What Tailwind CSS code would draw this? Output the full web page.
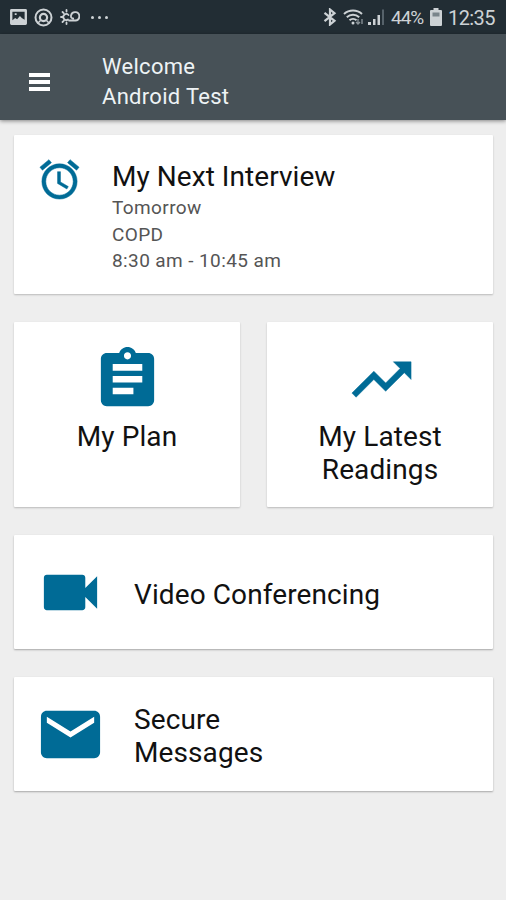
<!DOCTYPE html>
<html lang="en">

<head>
    <meta charset="UTF-8" />
    <meta name="viewport" content="width=device-width, initial-scale=1.0" />
    <title>Welcome</title>
    <script src="https://cdn.jsdelivr.net/npm/@tailwindcss/browser@4"></script>
</head>

<body class="bg-[#eeeeee] font-[Roboto,sans-serif] text-[#111111] h-[900px] overflow-hidden">
    <!-- Status bar -->
    <div class="bg-[#222d34] h-[34px] flex items-center justify-between pl-[10px] pr-[10px] text-[#cdd2d5]">
        <div class="flex items-center gap-[7px]">
            <svg class="w-[17px] h-[16px]" viewBox="0 0 18 17" fill="currentColor">
                <path fill-rule="evenodd" d="M1.500 0h15A1.500 1.500 0 0 1 18 1.500v14a1.500 1.500 0 0 1-1.500 1.500h-15A1.500 1.500 0 0 1 0 15.500v-14A1.500 1.500 0 0 1 1.500 0zM2.500 3v9l3-2.500 2 1.500 3-3.500 2 2 3 2V3zM5 4.500h2v2H5z" />
            </svg>
            <svg class="w-[19px] h-[19px]" viewBox="0 0 19 19" fill="none" stroke="currentColor">
                <circle cx="9.500" cy="9.500" r="8" stroke-width="2" />
                <circle cx="9.500" cy="9.500" r="3.600" stroke-width="2.200" />
                <path d="M3.500 15.500l3-3M12.500 12.500l3 3" stroke-width="1.500" />
            </svg>
            <svg class="w-[20px] h-[18px]" viewBox="0 0 20 18" fill="none" stroke="currentColor" stroke-width="1.800" stroke-linecap="round">
                <path d="M8 11.500a3 3 0 1 1 .5-4.500M1 9h1.500M2.500 4l1.200 1.200M6.500 2v1.500M2.500 14l1.200-1.200M6.500 16v-1.500" />
                <path d="M9 12.500h6.500a4.200 4.200 0 1 0-4.500-5c-.3 2 .8 3 2.200 3" />
            </svg>
            <div class="flex gap-[4px] pl-[4px]">
                <span class="w-[3px] h-[3px] rounded-full bg-[#cdd2d5]"></span>
                <span class="w-[3px] h-[3px] rounded-full bg-[#cdd2d5]"></span>
                <span class="w-[3px] h-[3px] rounded-full bg-[#cdd2d5]"></span>
            </div>
        </div>
        <div class="flex items-center">
            <svg class="w-[14px] h-[18px]" viewBox="0 0 14 18" fill="none" stroke="currentColor" stroke-width="2.200">
                <path d="M1.500 4.800l10 8L7 16.500v-15l4.500 3.700-10 8" />
            </svg>
            <svg class="w-[22px] h-[18px] ml-[6px]" viewBox="0 0 22 18" fill="none" stroke="currentColor" stroke-width="2">
                <path d="M1 6a13.500 13.500 0 0 1 18 0M3.800 9.200a9.300 9.300 0 0 1 12.400 0M6.500 12.300a5.200 5.200 0 0 1 7 0" />
                <circle cx="10" cy="15" r="1.500" fill="currentColor" stroke="none" />
                <path d="M15 11v5M13 14l2 2 2-2M19 16v-5" stroke="#8d969b" stroke-width="1.300" />
            </svg>
            <svg class="w-[17px] h-[18px] ml-[3px]" viewBox="0 0 17 18" fill="currentColor">
                <path d="M0 14h3v3H0zM5 11h2.500v6H5zM9.500 7H12v10H9.500z" />
                <path d="M14 1.500h2V17h-2z" fill="#56626a" />
            </svg>
            <span class="text-[19px] ml-[6px] w-[35px] whitespace-nowrap tracking-[-1px] mt-[2px]">44%</span>
            <svg class="w-[12px] h-[18px] ml-[4px]" viewBox="0 0 12 18" fill="currentColor">
                <path fill-rule="evenodd" d="M3.500 0h5v2H11a1 1 0 0 1 1 1v14a1 1 0 0 1-1 1H1a1 1 0 0 1-1-1V3a1 1 0 0 1 1-1h2.500z" />
                <path d="M2.500 4.500h7v4h-7z" fill="#7a858b" />
            </svg>
            <span class="text-[20px] ml-[6px] w-[48px] whitespace-nowrap tracking-[-0.6px] mt-[2px]">12:35</span>
        </div>
    </div>

    <!-- Header -->
    <header class="bg-[#475157] h-[86px] flex items-center pl-[29px] shadow-[0_1px_4px_rgba(0,0,0,0.45)]">
        <button class="flex flex-col gap-[3px] w-[21px] mt-[9px]">
            <span class="h-[4px] w-full bg-white"></span>
            <span class="h-[4px] w-full bg-white"></span>
            <span class="h-[4px] w-full bg-white"></span>
        </button>
        <h1 class="ml-[52px] mt-[10px] text-[22px] leading-[30px] tracking-[0.3px] text-[#eef3f5]">Welcome<br>Android Test</h1>
    </header>

    <!-- Cards -->
    <main class="pl-[14px] pr-[13px] pt-[15px] flex flex-col gap-[28px]">
        <section class="bg-white h-[159px] flex pl-[22px] pt-[21px] rounded-[1px] shadow-[0_1px_2px_rgba(0,0,0,0.22)]">
            <svg class="w-[47px] h-[47px] shrink-0 text-[#006b96]" viewBox="0 0 24 24" fill="currentColor" stroke="currentColor" stroke-width="0.25">
                <path d="M22 5.720l-4.600-3.860-1.290 1.530 4.600 3.860L22 5.720zM7.880 3.390L6.600 1.860 2 5.710l1.290 1.530 4.590-3.850zM12.500 8H11v6l4.750 2.850.75-1.230-4-2.370V8zM12 4c-4.970 0-9 4.030-9 9s4.020 9 9 9c4.970 0 9-4.030 9-9s-4.030-9-9-9zm0 16c-3.870 0-7-3.130-7-7s3.130-7 7-7 7 3.130 7 7-3.130 7-7 7z" />
            </svg>
            <div class="ml-[29px] mt-[4px]">
                <h2 class="text-[28px] leading-[33px] tracking-[0.05px]">My Next Interview</h2>
                <p class="text-[19px] leading-[26.500px] mt-[2px] tracking-[0.4px] text-[#555555]">Tomorrow<br>COPD<br>8:30 am - 10:45 am</p>
            </div>
        </section>

        <div class="grid grid-cols-2 gap-[27px]">
            <section class="bg-white h-[185px] flex flex-col items-center pt-[22px] rounded-[1px] shadow-[0_1px_2px_rgba(0,0,0,0.22)]">
                <svg class="w-[71px] h-[71px] text-[#006b96]" viewBox="0 0 24 24" fill="currentColor">
                    <path d="M19 3h-4.180C14.400 1.840 13.300 1 12 1c-1.300 0-2.400.84-2.820 2H5c-1.100 0-2 .9-2 2v14c0 1.100.9 2 2 2h14c1.100 0 2-.9 2-2V5c0-1.100-.9-2-2-2zm-7-.2c.7 0 1.200.5 1.200 1.200s-.5 1.200-1.200 1.200-1.200-.5-1.200-1.200.5-1.200 1.200-1.200zm2 14.200H7v-2.200h7V17zm3-4H7v-2.200h10V13zm0-4H7V6.800h10V9z" />
                </svg>
                <h2 class="mt-[5px] text-[28px] leading-[33px] tracking-[0.1px]">My Plan</h2>
            </section>
            <section class="bg-white h-[185px] flex flex-col items-center pt-[22px] rounded-[1px] shadow-[0_1px_2px_rgba(0,0,0,0.22)]">
                <svg class="w-[71px] h-[71px] ml-[2px] text-[#006b96]" viewBox="0 0 24 24" fill="currentColor" stroke="currentColor" stroke-width="0.15">
                    <path d="M16 6l2.290 2.290-4.880 4.880-4-4L2 16.590 3.410 18l6-6 4 4 6.300-6.290L22 12V6z" />
                </svg>
                <h2 class="mt-[5px] text-[28px] leading-[33px] tracking-[0.1px] text-center">My Latest<br>Readings</h2>
            </section>
        </div>

        <section class="bg-white h-[114px] flex items-center pl-[21px] rounded-[1px] shadow-[0_1px_2px_rgba(0,0,0,0.3)]">
            <svg class="w-[71px] h-[71px] text-[#006b96]" viewBox="0 0 24 24" fill="currentColor">
                <path d="M17 10.500V7c0-.55-.45-1-1-1H4c-.55 0-1 .45-1 1v10c0 .55.45 1 1 1h12c.55 0 1-.45 1-1v-3.500l4 4v-11l-4 4z" />
            </svg>
            <h2 class="ml-[28px] mt-[4px] text-[28px] leading-[33px] tracking-[0.1px]">Video Conferencing</h2>
        </section>

        <section class="bg-white h-[114px] flex items-center pl-[21px] rounded-[1px] shadow-[0_1px_2px_rgba(0,0,0,0.3)]">
            <svg class="w-[71px] h-[71px] text-[#006b96]" viewBox="0 0 24 24" fill="currentColor">
                <path d="M20 4H4c-1.100 0-1.990.9-1.990 2L2 18c0 1.100.9 2 2 2h16c1.100 0 2-.9 2-2V6c0-1.100-.9-2-2-2zm0 4l-8 5-8-5V6l8 5 8-5v2z" />
            </svg>
            <h2 class="ml-[28px] mt-[4px] text-[28px] leading-[33px] tracking-[0.1px]">Secure<br>Messages</h2>
        </section>
    </main>
</body>

</html>
